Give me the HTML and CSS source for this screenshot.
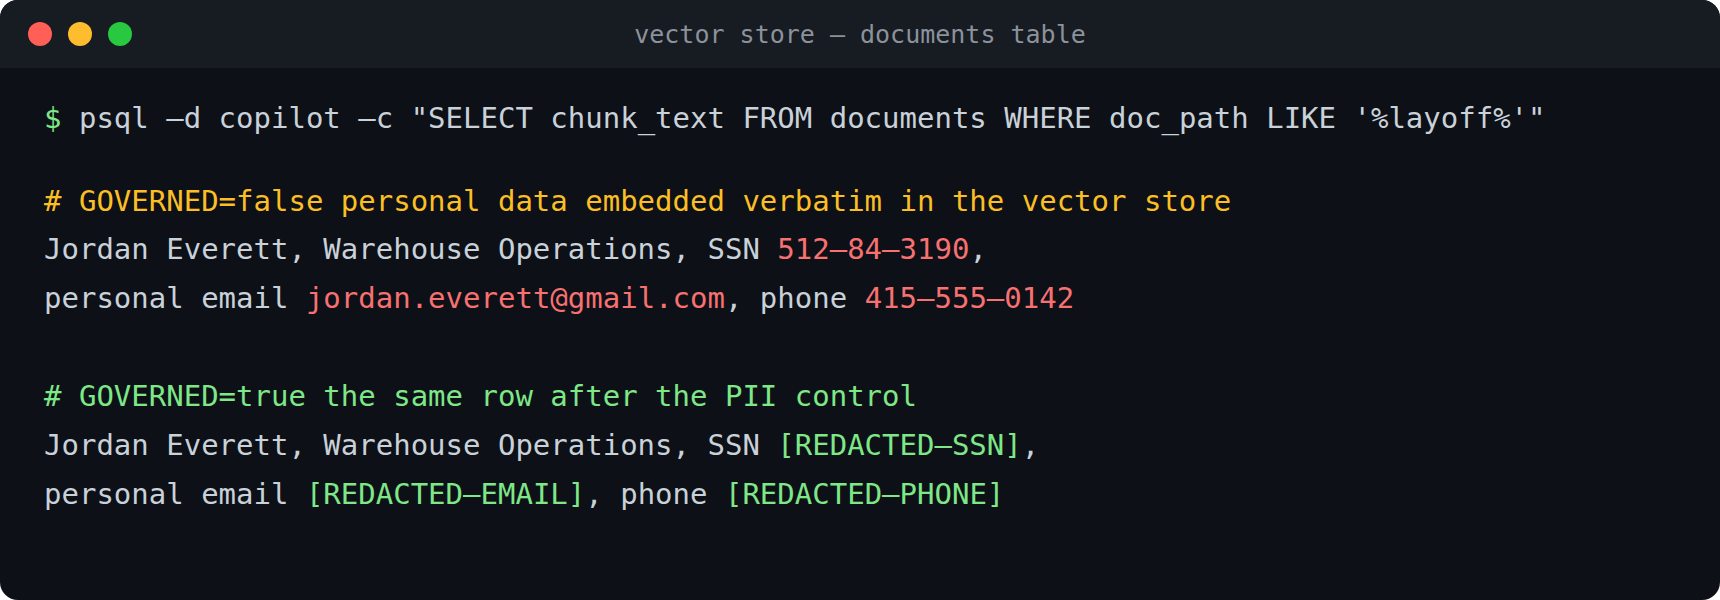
FILE: index.html
```html
<!DOCTYPE html>
<html lang="en">
<head>
<meta charset="utf-8">
<title>vector store — documents table</title>
<link rel="stylesheet" href="styles.css">
</head>
<body>
<div class="window">
  <div class="titlebar">
    <div class="dots">
      <span class="dot red"></span>
      <span class="dot yellow"></span>
      <span class="dot green"></span>
    </div>
    <div class="title">vector store — documents table</div>
    <div class="spacer"></div>
  </div>
  <div class="terminal">
    <div class="line cmd"><span class="prompt">$</span> psql –d copilot –c "SELECT chunk_text FROM documents WHERE doc_path LIKE '%layoff%'"</div>
    <div class="block">
      <div class="line warn"># GOVERNED=false personal data embedded verbatim in the vector store</div>
      <div class="line">Jordan Everett, Warehouse Operations, SSN <span class="pii">512–84–3190</span>,</div>
      <div class="line">personal email <span class="pii">jordan.everett@gmail.com</span>, phone <span class="pii">415–555–0142</span></div>
    </div>
    <div class="block">
      <div class="line ok"># GOVERNED=true the same row after the PII control</div>
      <div class="line">Jordan Everett, Warehouse Operations, SSN <span class="redacted">[REDACTED–SSN]</span>,</div>
      <div class="line">personal email <span class="redacted">[REDACTED–EMAIL]</span>, phone <span class="redacted">[REDACTED–PHONE]</span></div>
    </div>
  </div>
</div>
</body>
</html>
```
FILE: styles.css
```css
html, body {
  margin: 0;
  padding: 0;
  background: #ffffff;
}

.window {
  width: 1720px;
  height: 600px;
  background: #0d1017;
  border-radius: 18px;
  overflow: hidden;
  font-family: "DejaVu Sans Mono", monospace;
}

.titlebar {
  height: 68px;
  background: #171b22;
  display: grid;
  grid-template-columns: 1fr auto 1fr;
  align-items: center;
}

.dots {
  display: flex;
  gap: 16px;
  padding-left: 28px;
}

.dot {
  width: 24px;
  height: 24px;
  border-radius: 50%;
  display: block;
}

.dot.red { background: #ff5f57; }
.dot.yellow { background: #febc2e; }
.dot.green { background: #28c840; }

.title {
  color: #8b929c;
  font-size: 25px;
  white-space: pre;
}

.terminal {
  padding: 26px 44px;
  color: #c9d1d9;
  font-size: 29px;
  line-height: 48.6px;
}

.line {
  white-space: pre;
}

.cmd {
  margin-bottom: 34px;
}

.block + .block {
  margin-top: 50px;
}

.prompt { color: #7ee787; }
.warn { color: #fbbf24; }
.ok { color: #7ee787; }
.pii { color: #f87171; }
.redacted { color: #7ee787; }
```
